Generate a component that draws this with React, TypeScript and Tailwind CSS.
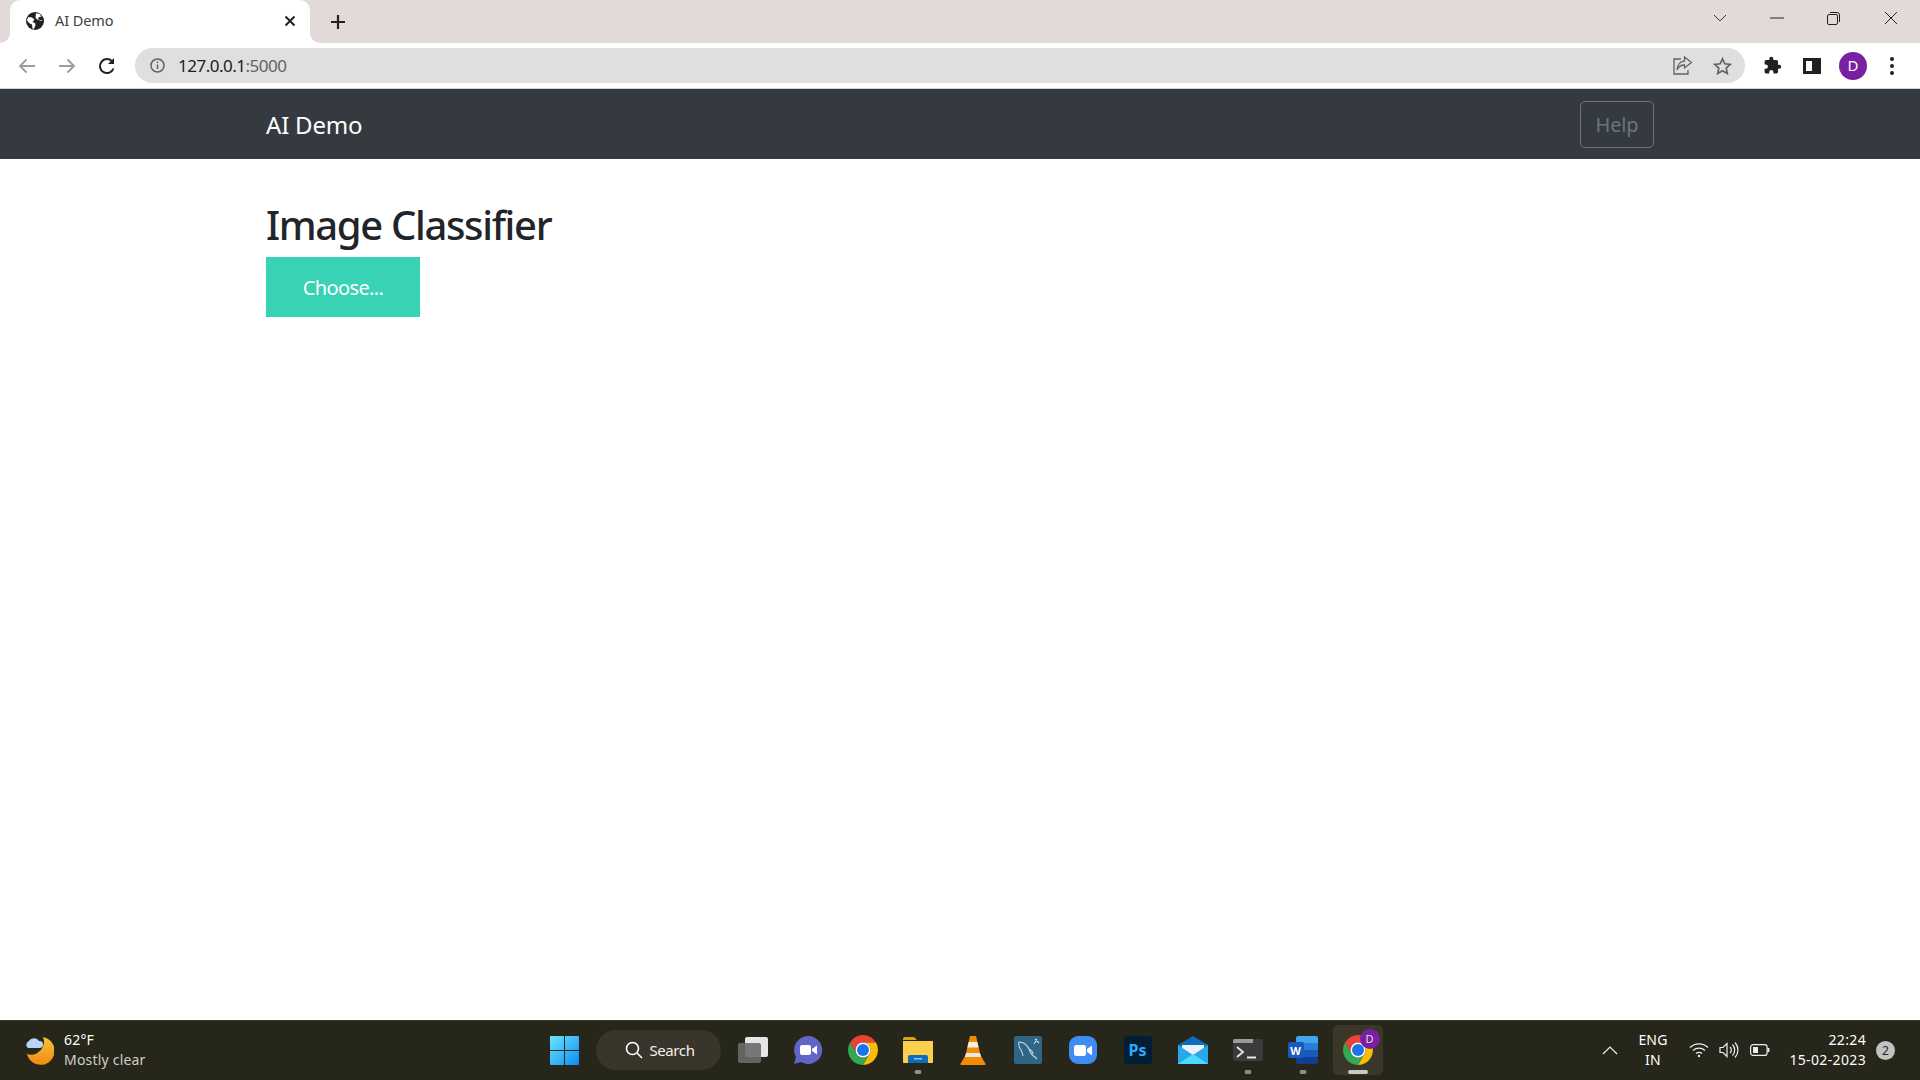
import React from "react";

const ui = "font-['Noto_Sans','Open_Sans',sans-serif]";

function ChromeLogo({ size = 30 }: { size?: number }) {
  return (
    <svg width={size} height={size} viewBox="4 4 40 40">
      <path fill="#ea4335" d="M6.68 14A20 20 0 0 1 41.32 14H24A10 10 0 0 0 15.34 29Z" />
      <path fill="#fbbc04" d="M41.32 14A20 20 0 0 1 24 44L32.66 29A10 10 0 0 0 24 14Z" />
      <path fill="#34a853" d="M6.68 14L15.34 29A10 10 0 0 0 32.66 29L24 44A20 20 0 0 1 6.68 14Z" />
      <circle cx="24" cy="24" r="10" fill="#fff" />
      <circle cx="24" cy="24" r="8" fill="#1a73e8" />
    </svg>
  );
}

function TaskSlot({ children, dot, active }: { children: React.ReactNode; dot?: boolean; active?: boolean }) {
  return (
    <div className={`relative h-[50px] flex items-center justify-center rounded-[5px] ${active ? "w-[50px] mx-[2.5px] bg-[#3a3628]" : "w-[55px]"}`}>
      {children}
      {dot && <span className="absolute bottom-[1px] left-1/2 -translate-x-1/2 w-[7px] h-[4px] rounded-full bg-[#8f8f8a]" />}
      {active && <span className="absolute bottom-[1px] left-1/2 -translate-x-1/2 w-[20px] h-[4px] rounded-full bg-[#c8c8c4]" />}
    </div>
  );
}

export default function App() {
  return (
    <div className={`h-screen w-full flex flex-col bg-white overflow-hidden ${ui}`}>
      {/* Tab strip */}
      <div className="h-[43px] shrink-0 bg-[#e2dad8] flex items-end">
        <div className="relative ml-[10px] w-[300px] h-[43px] bg-white rounded-t-[10px] flex items-center pl-[16px] pr-[14px]">
          <svg className="absolute left-[-10px] bottom-0" width="10" height="10" viewBox="0 0 10 10"><path d="M10 0V10H0A10 10 0 0 0 10 0Z" fill="#fff" /></svg>
          <svg className="absolute right-[-10px] bottom-0" width="10" height="10" viewBox="0 0 10 10"><path d="M0 0V10H10A10 10 0 0 1 0 0Z" fill="#fff" /></svg>
          <svg className="mt-[-1px]" width="18" height="18" viewBox="0 0 18 18">
            <circle cx="9" cy="9" r="9" fill="#202124" />
            <path d="M2.500 5L6 5.500 8.500 7.500 6.500 10l2.500 1 .5 2-1.500 4-1.500-.500-.5-4-3-1.500L.8 8Z" fill="#fff" />
            <path d="M10 1.200l3.500.8 2 2.500-2.800.8-.7 2.200 4.500 1-1 .5-4.500-1.500L9.500 5.500Z" fill="#fff" />
          </svg>
          <span className="ml-[11px] mt-[-2px] text-[14.5px] tracking-[-0.1px] text-[#3c4043] flex-1">AI Demo</span>
          <svg className="mt-[-1px]" width="12" height="12" viewBox="0 0 12 12" stroke="#202124" strokeWidth="2"><path d="M1.500 1.500l9 9M10.500 1.500l-9 9" /></svg>
        </div>
        <div className="h-[43px] flex items-center ml-[20px]">
          <svg width="16" height="16" viewBox="0 0 16 16" stroke="#202124" strokeWidth="2.200"><path d="M8 1v14M1 8h14" /></svg>
        </div>
        <div className="flex-1" />
        <div className="h-[43px] flex items-start pt-[6px] pr-[1px]">
          {/* Window controls */}
          <div className="w-[57px] h-[24px] flex items-center justify-center">
            <svg width="14" height="8" viewBox="0 0 14 8" fill="none" stroke="#3a3a3a"><path d="M1 1l6 6 6-6" /></svg>
          </div>
          <div className="w-[57px] h-[24px] flex items-center justify-center">
            <svg width="14" height="2" viewBox="0 0 14 2" stroke="#222"><path d="M0 1h14" /></svg>
          </div>
          <div className="w-[57px] h-[24px] flex items-center justify-center">
            <svg width="13" height="13" viewBox="0 0 13 13" fill="none" stroke="#222"><rect x=".5" y="2.500" width="10" height="10" rx="1.500" /><path d="M3 .5h7a2.500 2.500 0 0 1 2.500 2.500v7" /></svg>
          </div>
          <div className="w-[57px] h-[24px] flex items-center justify-center">
            <svg width="14" height="14" viewBox="0 0 14 14" stroke="#222"><path d="M1 1l12 12M13 1L1 13" /></svg>
          </div>
        </div>
      </div>

      {/* Toolbar */}
      <div className="h-[46px] shrink-0 bg-white border-b border-[#d2d2d2] flex items-center">
        <div className="w-[135px] shrink-0 flex items-center pl-[18px] gap-[22px]">
          <svg width="18" height="16" viewBox="0 0 18 16" fill="none" stroke="#9b9b9b" strokeWidth="1.800"><path d="M17 8H2M8.500 1.500L2 8l6.500 6.500" /></svg>
          <svg width="18" height="16" viewBox="0 0 18 16" fill="none" stroke="#9b9b9b" strokeWidth="1.800"><path d="M1 8h15M9.500 1.500L16 8l-6.500 6.500" /></svg>
          <svg width="18" height="18" viewBox="0 0 18 18" fill="none" stroke="#202124" strokeWidth="2"><path d="M15.500 11.500A7 7 0 1 1 14 4.200" /><path d="M16 1v6h-6z" fill="#202124" stroke="none" /></svg>
        </div>
        <div className="w-[1610px] h-[35px] rounded-full bg-[#dfdfdf] flex items-center pl-[15px] pr-[13px] shrink-0">
          <svg width="15" height="15" viewBox="0 0 15 15" fill="none" stroke="#5f6368" strokeWidth="1.500"><circle cx="7.500" cy="7.500" r="6.500" /><path d="M7.500 6.500v4.500" /><path d="M7.500 3.500v1.600" /></svg>
          <span className="ml-[13px] text-[17px] tracking-[-0.5px] text-[#202124] flex-1">127.0.0.1<span className="text-[#5f6368]">:5000</span></span>
          <svg className="mr-[20px]" width="20" height="19" viewBox="0 0 20 19" fill="none" stroke="#5f6368" strokeWidth="1.300"><path d="M8 3H1v15h14v-4" /><path d="M11.500 1l7 5.500-7 5.500V9C8 9 5.500 10.500 4 14c0-5 3-8.500 7.500-9Z" /></svg>
          <svg width="19" height="18" viewBox="0 0 19 18" fill="none" stroke="#5f6368" strokeWidth="1.700"><path d="M9.500 1.800l2.300 5 5.400.6-4 3.700 1.100 5.400-4.800-2.700-4.800 2.700 1.100-5.400-4-3.700 5.400-.6Z" /></svg>
        </div>
        <div className="flex-1 flex items-center pl-[18px]">
          <svg width="19" height="19" viewBox="0 0 24 24" fill="#202124"><path d="M20.500 11H19V7a2 2 0 0 0-2-2h-4V3.500a2.500 2.500 0 0 0-5 0V5H4a2 2 0 0 0-2 2v3.800h1.500a2.700 2.700 0 0 1 0 5.400H2V20a2 2 0 0 0 2 2h3.800v-1.500a2.700 2.700 0 0 1 5.400 0V22H17a2 2 0 0 0 2-2v-4h1.500a2.500 2.500 0 0 0 0-5Z" /></svg>
          <div className="ml-[21px] w-[18px] h-[16px] bg-white border-[3px] border-[#202124] border-r-[9px]" />
          <div className="ml-[18px] w-[28px] h-[28px] rounded-full bg-[#7b1fa2] flex items-center justify-center text-[15px] text-white">D</div>
          <div className="ml-[23px] flex flex-col gap-[3px]">
            <span className="w-[4px] h-[4px] rounded-full bg-[#202124]" />
            <span className="w-[4px] h-[4px] rounded-full bg-[#202124]" />
            <span className="w-[4px] h-[4px] rounded-full bg-[#202124]" />
          </div>
        </div>
      </div>

      {/* Navbar */}
      <div className="h-[70px] shrink-0 bg-[#343a40] flex items-center justify-between px-[266px]">
        <span className="text-[24px] text-white tracking-[-0.2px] mt-[1px]">AI Demo</span>
        <button className="w-[74px] h-[47px] border border-[#6c757d] rounded-[5px] text-[20px] text-[#6c757d] tracking-[-0.2px] pt-[1px]">Help</button>
      </div>

      {/* Content */}
      <div className="flex-1 px-[266px] pt-[42px]">
        <h1 className="text-[40px] leading-[48px] font-medium text-[#212529] tracking-[-1.35px]">Image Classifier</h1>
        <button className="mt-[8px] block w-[154px] h-[60px] pt-[2px] bg-[#38d3b5] text-white text-[20px] tracking-[-0.6px]">Choose...</button>
      </div>

      {/* Taskbar */}
      <div className="relative h-[60px] shrink-0 bg-[#27261a] border-t border-[#3a392d] pb-[1px] flex items-center text-white">
        <div className="flex items-center pl-[24px] w-[300px] shrink-0">
          <svg width="30" height="32" viewBox="0 0 30 32">
            <defs><linearGradient id="moon" x1="0" y1="0" x2="0" y2="1"><stop offset="0" stopColor="#f5c33b" /><stop offset="1" stopColor="#f08a12" /></linearGradient></defs>
            <path d="M19 3A14 14 0 1 1 3 20A13 13 0 0 0 19 3Z" fill="url(#moon)" />
            <path d="M4 14a4 4 0 0 1 1-7 6 6 0 0 1 10 0 3.500 3.500 0 0 1 1 7Z" fill="#b9d3f2" />
          </svg>
          <div className="ml-[10px] text-[14px] leading-[20px] tracking-[0.2px]">
            <div>62°F</div>
            <div className="text-[#cfcfca]">Mostly clear</div>
          </div>
        </div>

        <div className="ml-[237px] flex items-center">
          <TaskSlot>
            <svg width="29" height="29" viewBox="0 0 29 29">
              <defs><linearGradient id="win" x1="0" y1="0" x2="1" y2="1"><stop offset="0" stopColor="#6ce6ff" /><stop offset="1" stopColor="#0a8cf0" /></linearGradient></defs>
              <path fill="url(#win)" d="M0 1a1 1 0 0 1 1-1h13v14H0ZM15 0h13a1 1 0 0 1 1 1v13H15ZM0 15h14v14H1a1 1 0 0 1-1-1ZM15 15h14v13a1 1 0 0 1-1 1H15Z" />
            </svg>
          </TaskSlot>
          <div className="mx-[4px] w-[125px] h-[40px] rounded-full bg-[#39352a] flex items-center justify-center gap-[6px] pl-[3px] text-[15px] tracking-[-0.4px] text-[#f0f0ec]">
            <svg width="18" height="18" viewBox="0 0 18 18" fill="none" stroke="#fff" strokeWidth="1.600"><circle cx="7.500" cy="7.500" r="6" /><path d="M12 12l5 5" /></svg>
            Search
          </div>
          <TaskSlot>
            <div className="relative w-[30px] h-[26px]">
              <div className="absolute right-0 top-0 w-[23px] h-[20px] rounded-[2px] bg-[#e6e6e6]" />
              <div className="absolute left-0 bottom-0 w-[23px] h-[20px] rounded-[2px] bg-[#6a6a6a]/90" />
            </div>
          </TaskSlot>
          <TaskSlot>
            <svg width="30" height="30" viewBox="0 0 30 30">
              <path d="M15 1a14 14 0 1 1-7 26l-7 2 2-7A14 14 0 0 1 15 1Z" fill="#6264c7" />
              <rect x="7" y="10" width="11" height="10" rx="2" fill="#fff" />
              <path d="M19 14l5-3.500v9L19 16Z" fill="#fff" />
            </svg>
          </TaskSlot>
          <TaskSlot><ChromeLogo /></TaskSlot>
          <TaskSlot dot>
            <svg width="30" height="28" viewBox="0 0 30 28">
              <path d="M0 3a2 2 0 0 1 2-2h9l3 3h-14Z" fill="#d9a514" />
              <path d="M0 5h30v21a1 1 0 0 1-1 1H1a1 1 0 0 1-1-1Z" fill="#fbd04d" />
              <path d="M5 21a2 2 0 0 1 2-2h16a2 2 0 0 1 2 2v6H5Z" fill="#0f6cbd" />
              <rect x="11" y="22" width="8" height="1.500" fill="#7fd0f5" />
            </svg>
          </TaskSlot>
          <TaskSlot>
            <svg width="26" height="29" viewBox="0 0 26 29">
              <path d="M10 0h6l4 17H6Z" fill="#f28c00" />
              <path d="M8.700 6h8.600l1.300 5.500H7.400Z" fill="#eee" />
              <path d="M6 17h14l1 3 4 7a1 1 0 0 1-1 2H2a1 1 0 0 1-1-2l4-7Z" fill="#f28c00" />
              <path d="M6 17h14l1 4H5Z" fill="#e8e8e8" />
            </svg>
          </TaskSlot>
          <TaskSlot>
            <svg width="28" height="28" viewBox="0 0 28 28">
              <rect width="28" height="28" rx="2" fill="#2f6685" />
              <path d="M5 6c-1 3 0 5 2 8 1 2 2 4 2 6M5 6c4 0 8 3 10 7 1 3 2 6 6 8l2 2M21 3l4 4M23 3l-3 5M15 13c2 1 4 3 4 5" fill="none" stroke="#c9dbe5" strokeWidth="1.100" />
            </svg>
          </TaskSlot>
          <TaskSlot>
            <div className="w-[28px] h-[28px] rounded-[9px] bg-[#3f8cf5] flex items-center justify-center">
              <svg width="18" height="11" viewBox="0 0 18 11" fill="#fff"><rect width="12" height="11" rx="2.500" /><path d="M13 4l5-3.500v10L13 7Z" /></svg>
            </div>
          </TaskSlot>
          <TaskSlot>
            <div className="w-[28px] h-[28px] rounded-[4px] bg-[#001e36] flex items-center justify-center text-[16px] font-bold leading-none text-[#31a8ff]">Ps</div>
          </TaskSlot>
          <TaskSlot>
            <svg width="30" height="28" viewBox="0 0 30 28">
              <path d="M0 9L15 0l15 9v18H0Z" fill="#0f6cbd" />
              <path d="M4 9h22v8l-11 6-11-6Z" fill="#eef2f6" />
              <path d="M0 9l15 10L30 9v19H0Z" fill="#28a8ea" />
              <path d="M0 28l15-10 15 10Z" fill="#50d9ff" />
            </svg>
          </TaskSlot>
          <TaskSlot dot>
            <div className="w-[30px] h-[22px] rounded-[2px] bg-[#3b3b3b] overflow-hidden relative">
              <div className="h-[4px] bg-[#9a9a9a] w-[20px]" />
              <svg className="absolute left-[3px] top-[7px]" width="22" height="13" viewBox="0 0 22 13" fill="none" stroke="#e8e8e8" strokeWidth="1.800"><path d="M1 1l6 5-6 5" /><path d="M11 11.500h9" /></svg>
            </div>
          </TaskSlot>
          <TaskSlot dot>
            <div className="relative w-[30px] h-[28px]">
              <div className="absolute right-0 top-0 w-[22px] h-[28px] rounded-[2px] overflow-hidden flex flex-col">
                <div className="flex-1 bg-[#41a5ee]" />
                <div className="flex-1 bg-[#2b7cd3]" />
                <div className="flex-1 bg-[#185abd]" />
                <div className="flex-1 bg-[#103f91]" />
              </div>
              <div className="absolute left-0 top-[6px] w-[16px] h-[16px] rounded-[2px] bg-[#185abd] flex items-center justify-center text-[11px] font-bold leading-none text-white">W</div>
            </div>
          </TaskSlot>
          <TaskSlot active>
            <ChromeLogo />
            <span className="absolute right-[3px] top-[4px] w-[20px] h-[20px] rounded-full bg-[#7b1fa2] text-[11px] leading-[20px] text-center text-[#ddd]">D</span>
          </TaskSlot>
        </div>

        <div className="flex-1" />

        <div className="flex items-center pr-[25px]">
          <svg width="16" height="9" viewBox="0 0 16 9" fill="none" stroke="#eee" strokeWidth="1.200"><path d="M1 8l7-7 7 7" /></svg>
          <div className="ml-[10px] w-[50px] text-center text-[14px] leading-[20px] tracking-[0.2px]"><div>ENG</div><div>IN</div></div>
          <svg className="ml-[11px]" width="20" height="16" viewBox="0 0 20 16" fill="none" stroke="#eee" strokeWidth="1.300"><path d="M1 5.500a13 13 0 0 1 18 0M4 8.500a9 9 0 0 1 12 0M7 11.500a5 5 0 0 1 6 0" /><circle cx="10" cy="14" r="1.200" fill="#eee" stroke="none" /></svg>
          <svg className="ml-[10px]" width="20" height="18" viewBox="0 0 20 18" fill="none" stroke="#eee" strokeWidth="1.200"><path d="M1 6.500h3l4-4v13l-4-4H1Z" /><path d="M11 6a4 4 0 0 1 0 6M13.500 3.500a8 8 0 0 1 0 11M16 1.500a11 11 0 0 1 0 15" /></svg>
          <svg className="ml-[11px]" width="20" height="12" viewBox="0 0 20 12" fill="none" stroke="#eee" strokeWidth="1.200"><rect x=".6" y=".6" width="16.500" height="10.800" rx="2.500" /><rect x="3" y="3" width="5" height="6" fill="#eee" stroke="none" /><path d="M18.500 4v4" strokeWidth="1.800" /></svg>
          <div className="ml-[8px] w-[88px] text-right text-[14px] leading-[20px] tracking-[0.35px]"><div>22:24</div><div className="whitespace-nowrap">15-02-2023</div></div>
          <div className="ml-[10px] w-[19px] h-[19px] rounded-full bg-[#c2c2c0] text-[#222] text-[12px] leading-[19px] text-center">2</div>
        </div>
      </div>
    </div>
  );
}
